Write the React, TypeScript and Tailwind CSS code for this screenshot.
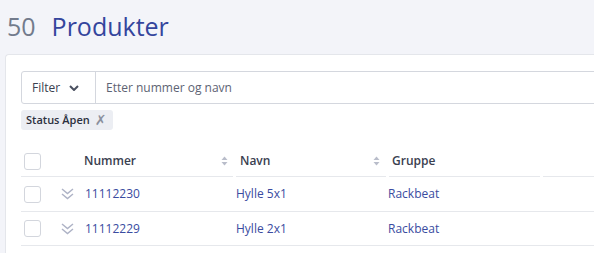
import React from "react";

const rows = [
  { nummer: "11112230", navn: "Hylle 5x1", gruppe: "Rackbeat" },
  { nummer: "11112229", navn: "Hylle 2x1", gruppe: "Rackbeat" },
];

function Checkbox() {
  return <div className="w-[17px] h-[17px] shrink-0 rounded-[3px] border border-[#d3d6dd] bg-white" />;
}

function SortIcon() {
  return (
    <svg width="7" height="10" viewBox="0 0 7 10" className="shrink-0">
      <path d="M3.5 0.5 L6.5 4 L0.5 4 Z" fill="#b9bdca" />
      <path d="M3.5 9.5 L6.5 6 L0.5 6 Z" fill="#b9bdca" />
    </svg>
  );
}

function ExpandIcon() {
  return (
    <svg width="13" height="12" viewBox="0 0 13 12" className="shrink-0">
      <path d="M1 1 L6.5 5.5 L12 1" fill="none" stroke="#aeb3c6" strokeWidth="1.5" />
      <path d="M1 6 L6.5 10.5 L12 6" fill="none" stroke="#aeb3c6" strokeWidth="1.5" />
    </svg>
  );
}

export default function App() {
  return (
    <div
      className="w-full h-screen overflow-hidden bg-[#f3f4f9]"
      style={{ fontFamily: '"Open Sans", "Noto Sans", sans-serif' }}
    >
      <div className="h-[54px] flex items-center pl-[7px] gap-[16px] text-[25px] leading-none pb-[1px]">
        <span className="text-[#727b8c]">50</span>
        <span className="text-[#34459d]">Produkter</span>
      </div>

      <div className="ml-[5px] mr-[-60px] h-full bg-white border-l border-t border-[#e4e6eb] rounded-tl-[4px] pt-4 pl-[15px]">
        <div className="flex h-[33px] border border-[#d4d7de] rounded-l-[3px] text-[12px]">
          <div className="w-[74px] flex items-center pl-[10px] border-r border-[#d4d7de] text-[#3b4150]">
            <span>Filter</span>
            <svg width="10" height="6" viewBox="0 0 10 6" className="ml-[9px]">
              <path d="M1 1 L5 5 L9 1" fill="none" stroke="#4a5060" strokeWidth="2" />
            </svg>
          </div>
          <div className="flex items-center pl-[10px] text-[#5d6373]">Etter nummer og navn</div>
        </div>

        <div className="mt-[6px] w-fit h-[20px] flex items-center pl-[5px] pr-[6px] bg-[#eceef3] rounded-[3px] text-[11px] font-semibold text-[#2c3140]">
          <span>Status Åpen</span>
          <span
            className="ml-[5px] text-[#8b909d] font-normal text-[14px] leading-none"
            style={{ fontFamily: '"DejaVu Sans", sans-serif' }}
          >
            ✗
          </span>
        </div>

        <div className="mt-4 flex h-[31px] text-[12px] font-semibold text-[#3a4050]">
          <div className="w-[212px] mr-[3px] flex items-center border-b border-[#e6e8ec]">
            <div className="ml-[3px]">
              <Checkbox />
            </div>
            <span className="ml-[43px]">Nummer</span>
            <span className="ml-auto mr-[5px]">
              <SortIcon />
            </span>
          </div>
          <div className="w-[150px] mr-[3px] flex items-center pl-[4px] border-b border-[#e6e8ec]">
            <span>Navn</span>
            <span className="ml-auto mr-[6px]">
              <SortIcon />
            </span>
          </div>
          <div className="w-[151px] mr-[3px] flex items-center pl-[3px] border-b border-[#e6e8ec]">
            <span>Gruppe</span>
          </div>
          <div className="flex-1 border-b border-[#e6e8ec]" />
        </div>

        {rows.map((r, i) => (
          <div
            key={r.nummer}
            className={`flex items-center border-b border-[#e6e8ec] text-[12px] text-[#3a4ba0] ${i === 0 ? "h-[35px]" : "h-[34px]"}`}
          >
            <div className="w-[215px] flex items-center">
              <div className="ml-[3px]">
                <Checkbox />
              </div>
              <span className="ml-[20px]">
                <ExpandIcon />
              </span>
              <span className="ml-[11px]">{r.nummer}</span>
            </div>
            <div className="w-[152px]">{r.navn}</div>
            <div>{r.gruppe}</div>
          </div>
        ))}
      </div>
    </div>
  );
}
